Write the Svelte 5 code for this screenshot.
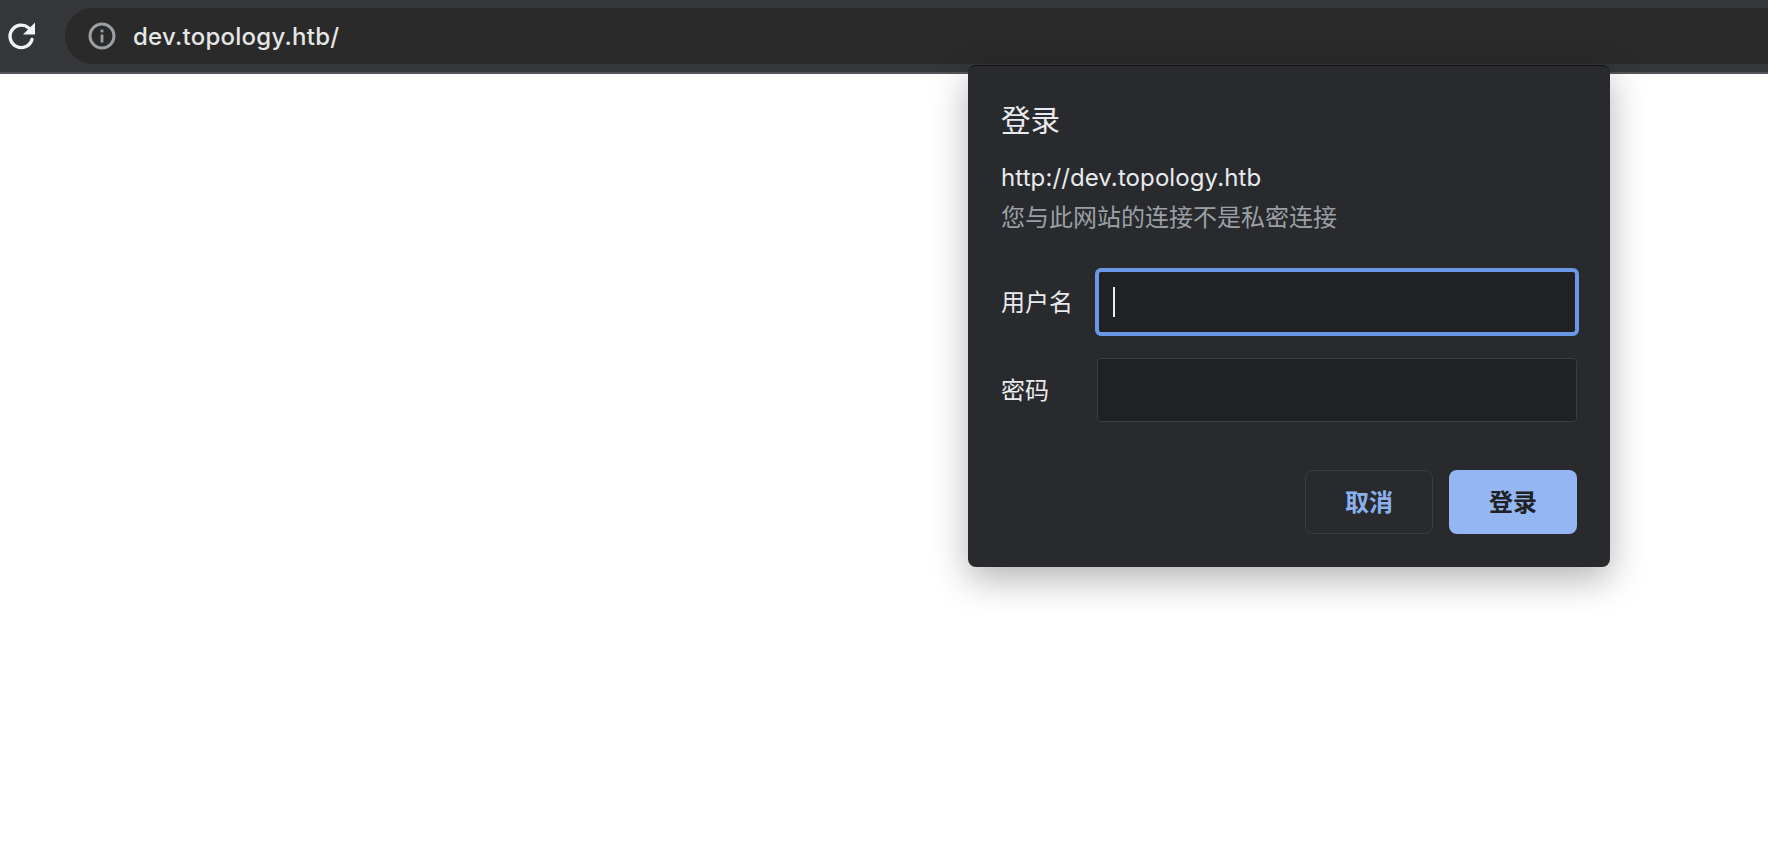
<script>
  let host = "dev.topology.htb/";
  let origin = "http://dev.topology.htb";
  let notice = "您与此网站的连接不是私密连接";
</script>

<style>
  :global(body) {
    margin: 0;
    background: #fff;
    overflow: hidden;
  }
  .page {
    position: relative;
    height: 850px;
    font-family: "Inter", "Noto Sans CJK SC", sans-serif;
  }
  .toolbar {
    display: flex;
    align-items: center;
    box-sizing: border-box;
    height: 74px;
    padding: 8px 0 8px 7px;
    background: #35363a;
    border-bottom: 2px solid #54555a;
  }
  .reload {
    width: 30px;
    height: 30px;
    flex: none;
  }
  .omnibox {
    flex: 1;
    display: flex;
    align-items: center;
    gap: 17px;
    height: 56px;
    margin-left: 28px;
    padding-left: 23px;
    border-radius: 28px 0 0 28px;
    background: #2a2a2a;
  }
  .info {
    width: 28px;
    height: 28px;
    flex: none;
  }
  .host {
    font-size: 24px;
    font-weight: 500;
    letter-spacing: 0.25px;
    color: #e6e6e6;
  }
  .dialog {
    position: absolute;
    top: 65px;
    left: 968px;
    width: 642px;
    height: 502px;
    box-sizing: border-box;
    padding: 34px 33px 0 33px;
    background: #292a2d;
    border-top: 1px solid #111114;
    border-radius: 8px;
    box-shadow: 0 12px 36px rgba(0, 0, 0, 0.3);
    color: #e8eaed;
  }
  h1 {
    margin: 0;
    font-size: 29.5px;
    font-weight: 400;
    line-height: 40px;
  }
  .origin {
    margin-top: 20px;
    font-size: 24px;
    letter-spacing: 0.1px;
    line-height: 36px;
  }
  .notice {
    margin-top: 4px;
    font-size: 24px;
    line-height: 36px;
    color: #9aa0a6;
    white-space: nowrap;
  }
  .fields {
    display: grid;
    grid-template-columns: 96px 1fr;
    row-gap: 24px;
    align-items: center;
    margin-top: 34px;
    font-size: 24px;
  }
  .label {
    padding-bottom: 3px;
  }
  .input {
    display: flex;
    align-items: center;
    height: 64px;
    box-sizing: border-box;
    padding-left: 15px;
    background: #202124;
    border: 1px solid #3c3d41;
    border-radius: 4px;
  }
  .focused {
    border-color: transparent;
    outline: 4px solid #6b98e6;
    outline-offset: -2px;
  }
  .caret {
    width: 2px;
    height: 30px;
    background: #e8eaed;
  }
  .actions {
    display: flex;
    justify-content: flex-end;
    gap: 16px;
    margin-top: 48px;
  }
  button {
    width: 128px;
    height: 64px;
    box-sizing: border-box;
    border-radius: 8px;
    font-family: inherit;
    font-size: 24px;
    font-weight: 700;
    padding: 0 0 3px;
  }
  .cancel {
    background: transparent;
    border: 1px solid #3c3d41;
    color: #8ab0ee;
  }
  .submit {
    background: #94b6f2;
    border: none;
    color: #202124;
  }
</style>

<div class="page">
  <div class="toolbar">
    <svg class="reload" viewBox="0 0 30 30" fill="none">
      <path d="M25 18.5A11.2 11.2 0 1 1 21.5 6.8" stroke="#f1f3f4" stroke-width="3.4" stroke-linecap="round" />
      <path d="M28 1.5V13.5H16Z" fill="#f1f3f4" />
    </svg>
    <div class="omnibox">
      <svg class="info" viewBox="0 0 28 28" fill="none">
        <circle cx="14" cy="14" r="12" stroke="#9aa0a6" stroke-width="3" />
        <rect x="12.6" y="12.5" width="2.8" height="8" fill="#9aa0a6" />
        <rect x="12.6" y="7.6" width="2.8" height="2.8" fill="#9aa0a6" />
      </svg>
      <span class="host">{host}</span>
    </div>
  </div>

  <div class="dialog">
    <h1>登录</h1>
    <div class="origin">{origin}</div>
    <div class="notice">{notice}</div>
    <div class="fields">
      <span class="label">用户名</span>
      <div class="input focused"><span class="caret"></span></div>
      <span class="label">密码</span>
      <div class="input"></div>
    </div>
    <div class="actions">
      <button class="cancel">取消</button>
      <button class="submit">登录</button>
    </div>
  </div>
</div>
